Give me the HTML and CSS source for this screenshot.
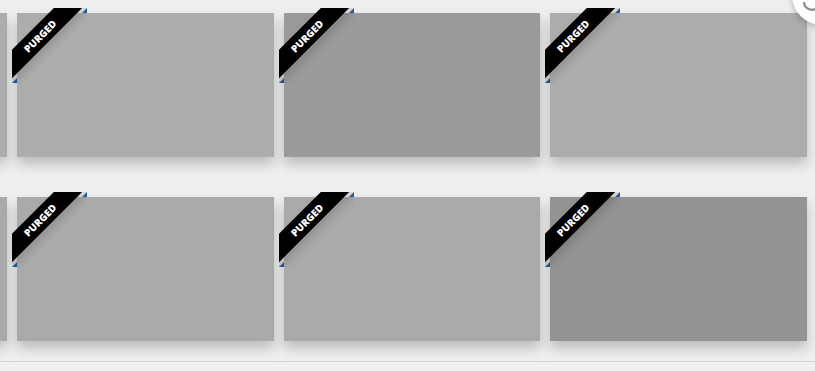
FILE: index.html
```html
<!DOCTYPE html>
<html lang="en">
<head>
  <meta charset="UTF-8">
  <meta name="viewport" content="width=device-width, initial-scale=1.0">
  <title>Gallery</title>
  <link rel="stylesheet" href="styles.css">
</head>
<body>
  <div class="gallery">
    <div class="card c1"></div>
    <div class="card c1"><div class="ribbon"><span>Purged</span></div></div>
    <div class="card c2"><div class="ribbon"><span>Purged</span></div></div>
    <div class="card c3"><div class="ribbon"><span>Purged</span></div></div>

    <div class="card c4"></div>
    <div class="card c4"><div class="ribbon"><span>Purged</span></div></div>
    <div class="card c4"><div class="ribbon"><span>Purged</span></div></div>
    <div class="card c5"><div class="ribbon"><span>Purged</span></div></div>
  </div>
  <div class="footer"></div>

  <button class="fab">
    <svg width="60" height="60" viewBox="0 0 60 60">
      <path d="M 12 37 A 8 8 0 0 0 26 42" fill="none" stroke="#8a8a8a" stroke-width="2.2"/>
    </svg>
  </button>
</body>
</html>
```

FILE: styles.css
```css
body {
  margin: 0;
  background: #efefef;
  font-family: "Open Sans", "Liberation Sans", sans-serif;
  overflow: hidden;
}
.gallery {
  display: grid;
  grid-template-columns: repeat(4, 256.5px);
  column-gap: 10px;
  row-gap: 40px;
  margin-left: -249.5px;
  padding-top: 13px;
}
.card {
  position: relative;
  height: 144px;
  box-shadow: 0 7px 12px rgba(0,0,0,0.22);
}
.c1 { background: #adadab; }
.c2 { background: #9a9a9a; }
.c3 { background: #acacac; }
.c4 { background: #aaaaaa; }
.c5 { background: #939393; }

.ribbon {
  position: absolute;
  top: -5px;
  left: -5px;
  width: 75px;
  height: 75px;
  overflow: hidden;
}
.ribbon::before,
.ribbon::after {
  content: '';
  position: absolute;
  z-index: -1;
  display: block;
  border: 5px solid #2f62a8;
  border-top-color: transparent;
  border-left-color: transparent;
}
.ribbon::before { top: 0; right: 0; }
.ribbon::after { bottom: 0; left: 0; }
.ribbon span {
  position: absolute;
  display: block;
  left: -28px;
  top: 18px;
  width: 112px;
  height: 20px;
  line-height: 20px;
  background: #000;
  color: #fff;
  font-size: 10px;
  font-weight: 800;
  text-align: center;
  text-transform: uppercase;
  box-shadow: 0 5px 10px rgba(0,0,0,0.15);
  text-shadow: 0 1px 1px rgba(0,0,0,0.2);
  transform: rotate(-45deg);
}

.footer {
  margin-top: 20px;
  border-top: 1px solid #d3d3d3;
  height: 10px;
}

.fab {
  position: absolute;
  top: -35px;
  left: 792px;
  width: 60px;
  height: 60px;
  padding: 0;
  border: none;
  border-radius: 50%;
  background: #fff;
  box-shadow: 0 2px 6px rgba(0,0,0,0.25);
}
.fab svg { display: block; }
```
